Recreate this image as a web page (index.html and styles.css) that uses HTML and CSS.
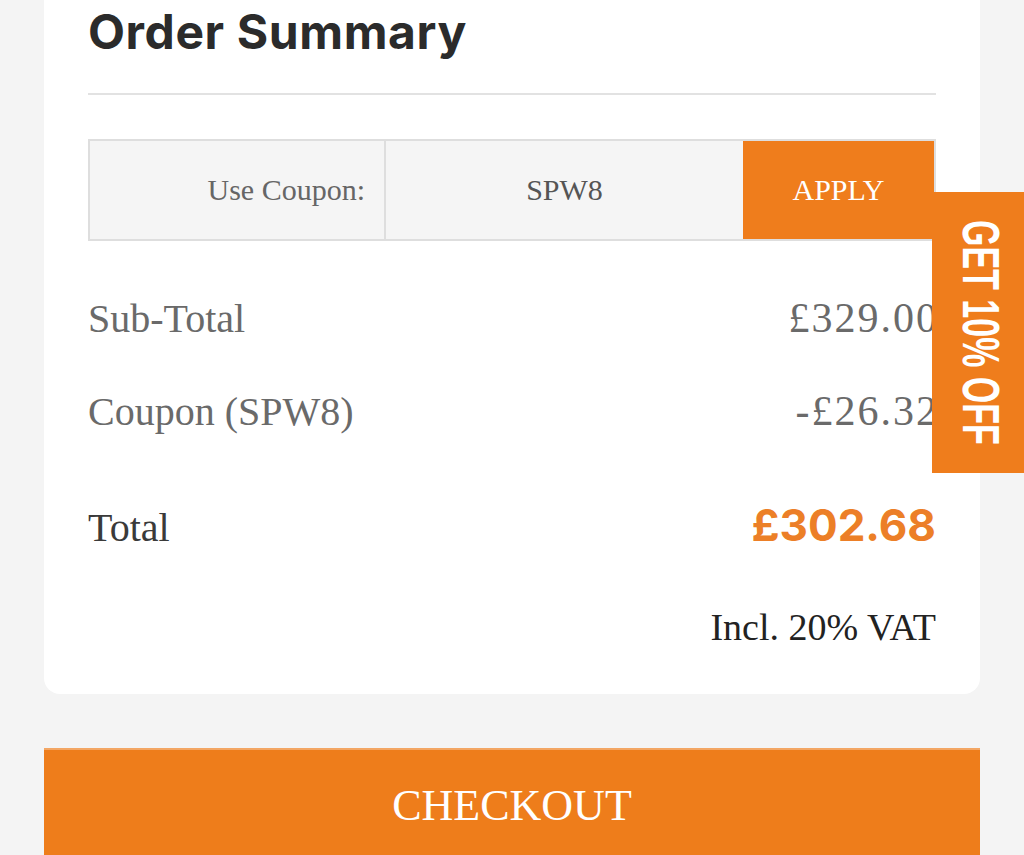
FILE: index.html
```html
<!DOCTYPE html>
<html lang="en">
<head>
<meta charset="utf-8">
<title>Order Summary</title>
<link rel="stylesheet" href="styles.css">
</head>
<body>
<div class="page">
  <section class="card">
    <h2 class="title">Order Summary</h2>
    <div class="divider"></div>
    <div class="coupon">
      <div class="coupon-label">Use Coupon:</div>
      <div class="coupon-input">SPW8</div>
      <div class="coupon-apply">APPLY</div>
    </div>
    <div class="row row-sub"><span>Sub-Total</span><span class="amount-under">£329.00</span></div>
    <div class="row row-coupon"><span>Coupon (SPW8)</span><span class="amount-under">-£26.32</span></div>
    <div class="row row-total"><span>Total</span><span class="total-amount">£302.68</span></div>
    <div class="vat">Incl. 20% VAT</div>
  </section>
  <div class="checkout">CHECKOUT</div>
</div>
<div class="promo-tab"><span class="promo-text">GET 10% OFF</span></div>
</body>
</html>
```
FILE: styles.css
```css
html, body {
  margin: 0;
  padding: 0;
}
body {
  background: #f4f4f4;
  width: 1024px;
  height: 855px;
  overflow: hidden;
  position: relative;
  font-family: "Liberation Serif", "Times New Roman", serif;
}
.page {
  padding: 0 44px;
}
.card {
  background: #ffffff;
  border-radius: 0 0 16px 16px;
  padding: 0 44px 0 44px;
  height: 694px;
  box-sizing: border-box;
}
.title {
  margin: 0;
  padding-top: 8px;
  font-family: "Inter", "Noto Sans", sans-serif;
  font-weight: 700;
  font-size: 48px;
  line-height: 48px;
  color: #2b2b2b;
  letter-spacing: 0.6px;
}
.divider {
  margin-top: 37px;
  height: 2px;
  background: #e2e2e2;
}
.coupon {
  margin-top: 44px;
  display: grid;
  grid-template-columns: 296px 357px 191px;
  border: 2px solid #dedede;
  background: #f5f5f5;
  height: 98px;
}
.coupon-label {
  border-right: 2px solid #dedede;
  display: flex;
  align-items: center;
  justify-content: flex-end;
  padding-right: 19px;
  font-size: 30px;
  color: #666;
}
.coupon-input {
  display: flex;
  align-items: center;
  justify-content: center;
  font-size: 30px;
  color: #555;
}
.coupon-apply {
  background: #ef7d1c;
  color: #fff;
  display: flex;
  align-items: center;
  justify-content: center;
  font-size: 30px;
}
.row {
  display: flex;
  justify-content: space-between;
  align-items: baseline;
  font-size: 40px;
  color: #6a6a6a;
  line-height: 46px;
}
.amount-under {
  font-size: 42px;
  letter-spacing: 2px;
  margin-right: -3px;
}
.row-sub {
  margin-top: 54px;
}
.row-coupon {
  margin-top: 46px;
}
.row-total {
  margin-top: 67px;
  color: #3a3a3a;
}
.total-amount {
  font-family: "Inter", "Noto Sans", sans-serif;
  font-weight: 700;
  font-size: 44px;
  color: #ec7f27;
}
.vat {
  margin-top: 53px;
  text-align: right;
  font-size: 38px;
  line-height: 46px;
  color: #222;
}
.checkout {
  margin-top: 54px;
  height: 120px;
  background: #ee7d1b;
  border-top: 2px solid #f3a664;
  box-sizing: border-box;
  color: #fff;
  font-size: 44px;
  text-align: center;
  padding-top: 32px;
  line-height: 48px;
}
.promo-tab {
  position: absolute;
  left: 932px;
  top: 192px;
  width: 92px;
  height: 281px;
  background: #ef7d1c;
  box-sizing: border-box;
  padding-left: 6px;
  display: flex;
  align-items: center;
  justify-content: center;
}
.promo-text {
  display: block;
  white-space: nowrap;
  writing-mode: vertical-rl;
  font-family: "Liberation Sans", "Arial", sans-serif;
  font-weight: 700;
  font-size: 34px;
  line-height: 34px;
  color: #fff;
  transform: scaleX(1.5);
  transform-origin: center center;
  letter-spacing: 0;
}
```
